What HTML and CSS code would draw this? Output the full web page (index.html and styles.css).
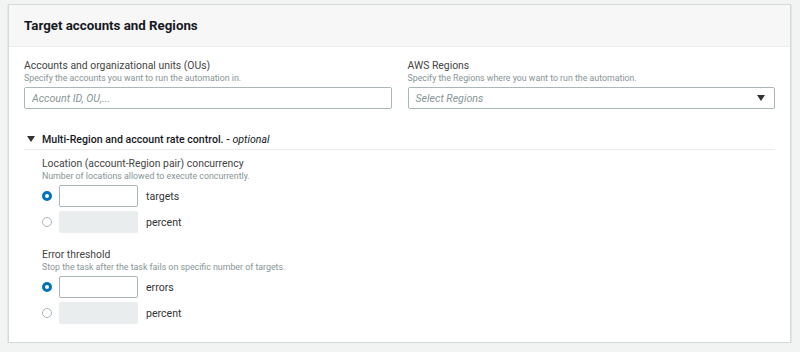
FILE: index.html
```html
<!DOCTYPE html>
<html lang="en">
<head>
    <meta charset="UTF-8">
    <title>Target accounts and Regions</title>
    <link rel="stylesheet" href="styles.css">
</head>
<body>
    <div class="panel">
        <div class="panel-header">
            <h2>Target accounts and Regions</h2>
        </div>
        <div class="panel-body">
            <!-- Accounts / Regions -->
            <div class="columns">
                <div class="field">
                    <div class="label">Accounts and organizational units (OUs)</div>
                    <div class="desc">Specify the accounts you want to run the automation in.</div>
                    <input type="text" class="text-input" placeholder="Account ID, OU,...">
                </div>
                <div class="field">
                    <div class="label">AWS Regions</div>
                    <div class="desc">Specify the Regions where you want to run the automation.</div>
                    <div class="select">
                        <span>Select Regions</span>
                        <span class="caret"></span>
                    </div>
                </div>
            </div>

            <!-- Rate control -->
            <div class="expander">
                <span class="caret small"></span>
                <span>Multi-Region and account rate control. - <i>optional</i></span>
            </div>
            <div class="expander-body">
                <div class="group">
                    <div class="label">Location (account-Region pair) concurrency</div>
                    <div class="desc">Number of locations allowed to execute concurrently.</div>
                    <div class="radio-row">
                        <span class="radio checked"></span>
                        <input type="text" class="small-input">
                        <span class="unit">targets</span>
                    </div>
                    <div class="radio-row">
                        <span class="radio"></span>
                        <input type="text" class="small-input" disabled>
                        <span class="unit">percent</span>
                    </div>
                </div>
                <div class="group">
                    <div class="label">Error threshold</div>
                    <div class="desc">Stop the task after the task fails on specific number of targets.</div>
                    <div class="radio-row">
                        <span class="radio checked"></span>
                        <input type="text" class="small-input">
                        <span class="unit">errors</span>
                    </div>
                    <div class="radio-row">
                        <span class="radio"></span>
                        <input type="text" class="small-input" disabled>
                        <span class="unit">percent</span>
                    </div>
                </div>
            </div>
        </div>
    </div>
</body>
</html>
```

FILE: styles.css
```css
body {
    margin: 0;
    padding: 4px 9px 0 8px;
    background-color: #f2f3f3;
    font-family: Roboto, "Open Sans", sans-serif;
    color: #444;
}
.panel {
    background-color: white;
    border: 1px solid #d5dbdb;
    box-shadow: 0 1px 1px rgba(0, 0, 0, 0.3);
    height: 337px;
}
.panel-header {
    height: 41px;
    padding: 0 15px;
    display: flex;
    align-items: center;
    background-color: #f7f7f7;
    border-bottom: 1px solid #eaeded;
}
h2 {
    margin: 0;
    font-size: 13.3px;
    font-weight: 700;
    color: #16191f;
}
.panel-body {
    padding: 12px 15px 0 15px;
}
.columns {
    display: flex;
    gap: 16px;
}
.field {
    flex: 1;
}
.label {
    font-size: 10.4px;
    line-height: 14px;
    color: #444;
}
.desc {
    font-size: 8.8px;
    line-height: 11px;
    color: #879596;
    margin-bottom: 3px;
}
.text-input,
.select {
    display: block;
    box-sizing: border-box;
    width: 100%;
    height: 22px;
    margin: 0;
    border: 1px solid #aab7b8;
    border-radius: 2px;
    padding: 0 7px;
    font-family: inherit;
    font-size: 10.6px;
    background: white;
}
.text-input::placeholder {
    font-style: italic;
    color: #879596;
}
.select {
    display: flex;
    align-items: center;
    justify-content: space-between;
    font-style: italic;
    color: #879596;
}
.caret {
    width: 0;
    height: 0;
    border-left: 4px solid transparent;
    border-right: 4px solid transparent;
    border-top: 6px solid #333;
    margin-right: 2px;
}
.caret.small {
    margin-right: 0;
}
.expander {
    display: flex;
    align-items: center;
    gap: 7px;
    margin-top: 20px;
    padding-left: 3px;
    height: 20px;
    border-bottom: 1px solid #eaeded;
    font-size: 10.6px;
    font-weight: 500;
    color: #16191f;
}
.expander i {
    font-weight: 400;
}
.expander-body {
    padding-left: 18px;
}
.group {
    padding-top: 7px;
}
.group + .group {
    padding-top: 15px;
}
.radio-row {
    display: flex;
    align-items: center;
    height: 22px;
}
.radio-row + .radio-row {
    margin-top: 4px;
}
.radio {
    box-sizing: border-box;
    width: 10px;
    height: 10px;
    border-radius: 50%;
    border: 1px solid #aab7b8;
    margin: 0 7px 0 0;
}
.radio.checked {
    border: 3px solid #0073bb;
}
.small-input {
    display: block;
    box-sizing: border-box;
    width: 79px;
    height: 22px;
    margin: 0;
    border: 1px solid #aab7b8;
    border-radius: 2px;
}
.small-input:disabled {
    background-color: #eaeded;
    border-color: #eaeded;
}
.unit {
    margin-left: 8px;
    font-size: 10.6px;
    color: #333;
}
```
